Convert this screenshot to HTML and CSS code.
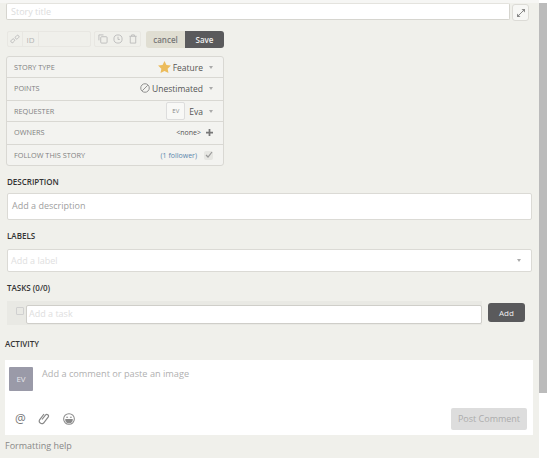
FILE: index.html
```html
<!DOCTYPE html>
<html lang="en">
<head>
    <meta charset="UTF-8">
    <title>Story</title>
    <link rel="stylesheet" href="styles.css">
</head>
<body>
    <div class="story">
        <div class="title-row">
            <div class="title-input">Story title</div>
            <div class="expand">
                <svg width="10" height="10" viewBox="0 0 10 10"><path d="M2 8 8 2" stroke="#888"/><path d="M5.500 1H9v3.500zM1 5.500V9h3.500z" fill="#888"/></svg>
            </div>
        </div>

        <div class="toolbar">
            <div class="id-group">
                <span class="tool-cell">
                    <svg width="10" height="10" viewBox="0 0 11 11" fill="none" stroke="#bbb"><rect x="0.8" y="6" width="4.500" height="3" rx="1.400" transform="rotate(-45 3 7.500)"/><rect x="5.600" y="2" width="4.500" height="3" rx="1.400" transform="rotate(-45 7.800 3.500)"/></svg>
                </span>
                <span class="tool-cell id-label">ID</span>
                <span class="id-value"></span>
            </div>
            <div class="copy-group">
                <span class="tool-cell">
                    <svg width="10" height="10" viewBox="0 0 11 11" fill="none" stroke="#bbb"><path d="M1 7V1h5"/><rect x="3" y="3" width="7" height="7" rx="1"/></svg>
                </span>
                <span class="tool-cell">
                    <svg width="10" height="10" viewBox="0 0 11 11" fill="none" stroke="#bbb"><circle cx="5.500" cy="5.500" r="4.500"/><path d="M5.500 3v3h2"/></svg>
                </span>
                <span class="tool-cell">
                    <svg width="10" height="10" viewBox="0 0 11 11" fill="none" stroke="#bbb"><path d="M1.500 2.500h8M4 2.500V1h3v1.500M2.500 2.500V10h6V2.500"/></svg>
                </span>
            </div>
            <div class="action-group">
                <span class="cancel">cancel</span>
                <span class="save">Save</span>
            </div>
        </div>

        <div class="info-table">
            <div class="info-row">
                <span class="info-label">STORY TYPE</span>
                <span class="info-value">
                    <svg width="13" height="12" viewBox="0 0 14 13"><path d="M7 0l2.100 4.400 4.900.6-3.600 3.300.9 4.700L7 10.700 2.700 13l.9-4.700L0 5l4.900-.6z" fill="#ecbc5c"/></svg>
                    Feature <i class="arrow"></i>
                </span>
            </div>
            <div class="info-row">
                <span class="info-label">POINTS</span>
                <span class="info-value">
                    <svg width="10" height="10" viewBox="0 0 11 11" fill="none" stroke="#888"><circle cx="5.500" cy="5.500" r="4.700"/><path d="M2.500 8.500l6-6"/></svg>
                    Unestimated <i class="arrow"></i>
                </span>
            </div>
            <div class="info-row">
                <span class="info-label">REQUESTER</span>
                <span class="info-value">
                    <span class="mini-avatar">EV</span>
                    Eva <i class="arrow"></i>
                </span>
            </div>
            <div class="info-row">
                <span class="info-label">OWNERS</span>
                <span class="info-value small">
                    &lt;none&gt;
                    <svg width="7" height="7" viewBox="0 0 8 8"><path d="M3 0h2v3h3v2H5v3H3V5H0V3h3z" fill="#777"/></svg>
                </span>
            </div>
            <div class="info-row">
                <span class="info-label">FOLLOW THIS STORY</span>
                <span class="info-value small">
                    <span class="followers">(1 follower)</span>
                    <span class="check-box">
                        <svg width="8" height="8" viewBox="0 0 8 8" fill="none" stroke="#999" stroke-width="1.200"><path d="M1 4l2 2 4-5"/></svg>
                    </span>
                </span>
            </div>
        </div>

        <h3 class="section-title description-title">DESCRIPTION</h3>
        <div class="text-box description-box">Add a description</div>

        <h3 class="section-title labels-title">LABELS</h3>
        <div class="text-box labels-box">
            <span>Add a label</span>
            <i class="arrow"></i>
        </div>

        <h3 class="section-title tasks-title">TASKS (0/0)</h3>
        <div class="tasks-row">
            <div class="task-field">
                <span class="task-check"></span>
                <div class="task-input">Add a task</div>
            </div>
            <span class="add-button">Add</span>
        </div>

        <h3 class="section-title activity-title">ACTIVITY</h3>
        <div class="comment-box">
            <div class="comment-top">
                <span class="avatar">EV</span>
                <span class="comment-placeholder">Add a comment or paste an image</span>
            </div>
            <div class="comment-bottom">
                <div class="comment-icons">
                    <span class="at-icon">@</span>
                    <svg width="13" height="14" viewBox="0 0 13 14" fill="none" stroke="#888" stroke-width="1.200"><path d="M4 7.500l3.600-4.600a1.700 1.700 0 0 1 2.700 2L5.600 11a2.600 2.600 0 0 1-4-3.200L6 2"/></svg>
                    <svg width="12" height="12" viewBox="0 0 13 13" fill="none" stroke="#888" stroke-width="1.100"><circle cx="6.500" cy="6.500" r="5.800"/><path d="M3 7h7a3.500 3.500 0 0 1-7 0z" fill="#888"/><path d="M3.500 4.500h2M7.500 4.500h2"/></svg>
                </div>
                <span class="post-button">Post Comment</span>
            </div>
        </div>
        <div class="format-help">Formatting help</div>
    </div>

    <div class="scroll-track"><div class="scroll-thumb"></div></div>
</body>
</html>
```

FILE: styles.css
```css
* {
    margin: 0;
    padding: 0;
    box-sizing: border-box;
}

html, body {
    height: 458px;
    overflow: hidden;
}

body {
    display: flex;
    font-family: "Open Sans", "Liberation Sans", sans-serif;
    background: #f0f0eb;
    color: #555;
}

.story {
    width: 539px;
    height: 458px;
    border-top: 3px solid #f6f6f4;
}

/* top row */
.title-row {
    display: flex;
    gap: 2px;
    margin-left: 6px;
}

.title-input {
    width: 504px;
    height: 17px;
    padding-left: 4px;
    background: #fff;
    border: 1px solid #d6d5cf;
    border-top-color: #e4e3de;
    border-radius: 2px;
    font-size: 9px;
    line-height: 15px;
    color: #dcdcdc;
}

.expand {
    display: flex;
    align-items: center;
    justify-content: center;
    width: 17px;
    height: 17px;
    margin-top: 1px;
    background: #f7f7f5;
    border: 1px solid #dcdbd6;
    border-radius: 3px;
}

/* toolbar */
.toolbar {
    display: flex;
    margin: 10px 0 0 7px;
    height: 17px;
}

.id-group, .copy-group {
    display: flex;
    height: 16px;
    border: 1px solid #e8e7e2;
    border-radius: 2px;
}

.id-group {
    width: 84px;
}

.copy-group {
    width: 47px;
    margin-left: 3px;
}

.tool-cell {
    display: flex;
    align-items: center;
    justify-content: center;
    width: 15px;
    border-right: 1px solid #e8e7e2;
    font-size: 8px;
    color: #b4b4b4;
}

.copy-group .tool-cell {
    border-right: none;
}

.id-label {
    width: 16px;
}

.id-value {
    flex: 1;
}

.action-group {
    display: flex;
    margin-left: 5px;
    font-size: 8px;
    font-weight: 600;
    line-height: 17px;
    text-align: center;
}

.cancel {
    width: 39px;
    background: #e0ded2;
    border-radius: 3px 0 0 3px;
    color: #777;
}

.save {
    width: 39px;
    background: #5a5a5c;
    border-radius: 0 3px 3px 0;
    color: #eee;
}

/* story info */
.info-table {
    width: 218px;
    height: 110px;
    margin: 8px 0 0 6px;
    background: #f3f3f0;
    border: 1px solid #d9d8d3;
    border-radius: 3px;
}

.info-row {
    display: flex;
    align-items: center;
    justify-content: space-between;
    height: 21px;
    padding: 0 10px 0 7px;
    border-bottom: 1px solid #d9d8d3;
}

.info-row:nth-child(even) {
    height: 23px;
    padding-bottom: 2px;
}

.info-row:last-child {
    height: 20px;
    border-bottom: none;
}

.info-label {
    font-size: 7.300px;
    color: #808080;
}

.info-value {
    display: flex;
    align-items: center;
    gap: 2px;
    font-size: 8.500px;
    color: #555;
}

.info-value.small {
    font-size: 7px;
    gap: 5px;
}

.arrow {
    width: 0;
    height: 0;
    margin-left: 4px;
    border-left: 2.500px solid transparent;
    border-right: 2.500px solid transparent;
    border-top: 3px solid #aaa;
}

.mini-avatar {
    width: 19px;
    height: 18px;
    margin-right: 2px;
    background: #f8f8f6;
    border: 1px solid #ddd;
    border-radius: 2px;
    font-size: 6px;
    line-height: 16px;
    text-align: center;
    color: #888;
}

.followers {
    color: #5a86ad;
}

.check-box {
    display: flex;
    align-items: center;
    justify-content: center;
    width: 9px;
    height: 9px;
    margin-left: 2px;
    background: #e6e6e2;
    border-radius: 2px;
}

/* sections */
.section-title {
    height: 11px;
    font-size: 8px;
    font-weight: 600;
    line-height: 9px;
    color: #333;
}

.description-title {
    margin: 11px 0 0 7px;
}

.labels-title {
    margin: 11px 0 0 7px;
}

.tasks-title {
    margin: 11px 0 0 7px;
}

.activity-title {
    margin: 14px 0 0 5px;
}

.text-box {
    width: 525px;
    margin-left: 7px;
    padding-left: 4px;
    background: #fff;
    border: 1px solid #dbdad5;
    border-radius: 2px;
    font-size: 9px;
}

.description-box {
    height: 27px;
    margin-top: 5px;
    line-height: 23px;
    color: #a0a0a0;
}

.labels-box {
    display: flex;
    align-items: center;
    justify-content: space-between;
    height: 23px;
    margin-top: 7px;
    padding: 0 10px 0 3px;
    color: #e0e0e0;
}

.tasks-row {
    display: flex;
    align-items: flex-start;
    width: 525px;
    height: 24px;
    margin: 7px 0 0 7px;
}

.task-field {
    display: flex;
    align-items: flex-start;
    gap: 2px;
    width: 475px;
    height: 24px;
    padding: 4px 0 0 9px;
    background: #e9e9e4;
}

.task-check {
    width: 8px;
    height: 8px;
    margin-top: 2px;
    border: 1px solid #d0d0d0;
    border-radius: 1px;
}

.task-input {
    flex: 1;
    height: 19px;
    padding-left: 2px;
    background: #fff;
    border: 1px solid #cfcec9;
    border-radius: 2px;
    font-size: 9px;
    line-height: 15px;
    color: #dedede;
}

.add-button {
    width: 37px;
    height: 19px;
    margin: 2px 0 0 6px;
    background: #5a5a5c;
    border-radius: 3px;
    font-size: 8px;
    line-height: 19px;
    text-align: center;
    color: #eee;
}

/* comment */
.comment-box {
    width: 528px;
    height: 75px;
    margin: 10px 0 0 5px;
    background: #fff;
}

.comment-top {
    display: flex;
    height: 48px;
    padding: 7px 0 0 4px;
}

.avatar {
    width: 24px;
    height: 24px;
    background: #9a9aa8;
    border-radius: 1px;
    font-size: 8px;
    line-height: 24px;
    text-align: center;
    color: #e6e6ea;
}

.comment-placeholder {
    margin-left: 9px;
    font-size: 9.200px;
    line-height: 13px;
    color: #b0b0b0;
}

.comment-bottom {
    display: flex;
    align-items: center;
    justify-content: space-between;
    padding: 0 6px 0 10px;
}

.comment-icons {
    display: flex;
    align-items: center;
    gap: 12px;
}

.at-icon {
    width: 11px;
    font-size: 12px;
    line-height: 14px;
    color: #777;
}

.post-button {
    width: 76px;
    height: 22px;
    background: #dddddd;
    border-radius: 2px;
    font-size: 9px;
    line-height: 22px;
    text-align: center;
    color: #acacac;
}

.format-help {
    margin: 5px 0 0 5px;
    font-size: 9px;
    line-height: 11px;
    color: #888;
}

/* scrollbar */
.scroll-track {
    width: 8px;
    height: 458px;
    padding-top: 3px;
    background: #fff;
}

.scroll-thumb {
    height: 390px;
    background: #bbb;
}
```
